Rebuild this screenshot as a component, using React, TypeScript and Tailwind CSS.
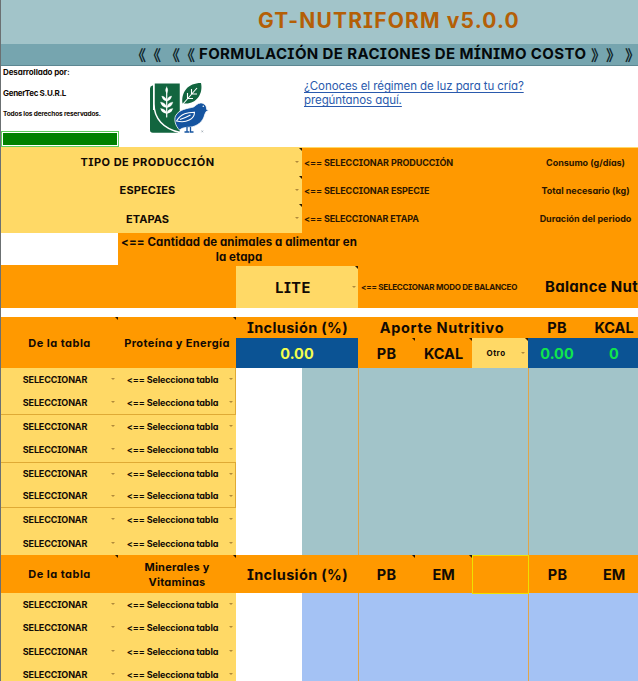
import type { ReactNode } from 'react';
import { clsx } from 'clsx';

const serifCaps = "[font-feature-settings:'ss02','cv11','calt'_0]";

function Note() {
  return <span className="absolute right-0 top-0 border-t-[3px] border-l-[3px] border-t-[#2a1700] border-l-transparent" />;
}

function Caret({ className }: { className?: string }) {
  return <span className={clsx('absolute h-0 w-0 border-x-[2px] border-t-[2px] border-x-transparent border-t-[#b08a3a]', className)} />;
}

function Cell({ children, className, note, caret }: { children?: ReactNode; className?: string; note?: boolean; caret?: string }) {
  return (
    <div className={clsx('relative flex shrink-0 items-center justify-center whitespace-nowrap', className)}>
      {children}
      {note && <Note />}
      {caret && <Caret className={caret} />}
    </div>
  );
}

function Logo() {
  return (
    <svg viewBox="148 81 64 54" className="h-[54px] w-[64px]">
      <path d="M153 85.5h-.5q-2.500 .5-2.500 3V130q0 2.800 2.800 2.800H178V110H153z" fill="#12653f" />
      <path d="M154 82.700H180.500V132.500C163 129 154 118 154 104z" fill="#12653f" stroke="#fff" strokeWidth="1.500" />
      <rect x="180" y="81" width="3" height="54" fill="#fff" />
      <g stroke="#fff" strokeWidth="1.200" fill="#fff" strokeLinecap="round">
        <path d="M166.700 92V117" fill="none" />
        <path d="M166.700 87q-2.300 3 0 6.500q2.300-3.500 0-6.500z" strokeWidth=".3" />
        <path d="M166.500 101q-4-.5-4.800-5q4.500.8 4.800 5zM166.900 101q4-.5 4.800-5q-4.500.8-4.800 5zM166.500 107.500q-5-.5-6-5.500q5.500.8 6 5.500zM166.900 107.500q5-.5 6-5.500q-5.500.8-6 5.500zM166.500 113.500q-4.800-.5-6-5q5.500.5 6 5zM166.900 113.500q4.800-.5 6-5q-5.500.5-6 5z" strokeWidth=".3" />
      </g>
      <path d="M182.500 103.500C181 92 188 83 201 83C203.500 94 196 104.500 184.500 103.500z" fill="#12653f" />
      <path d="M182.500 104.500L197 88M187.500 98.500V93M187.500 98.500H193M191.500 94V89M191.500 94H197" fill="none" stroke="#fff" strokeWidth="1.100" />
      <path d="M208.800 110.500L206.700 109.500C206.700 105.500 204 102.800 200.500 103C197.500 103.200 196 105.500 193.500 107C188 108.500 179 109 175.500 116C173.800 120 175.500 126 179.500 130C182.500 127.500 186 127.300 190 127.200C197 126.500 203.500 121.500 204.700 114.500L206.200 111.500z" fill="#1554a0" stroke="#fff" strokeWidth=".8" />
      <path d="M176.500 121C181 113 188 112.500 194.500 112.300C194.500 119 186.500 123.500 176.500 121zM180 119.500Q186 117.500 190.500 115" fill="none" stroke="#fff" strokeWidth="1.100" />
      <circle cx="203.300" cy="106.300" r=".8" fill="#fff" />
      <path d="M187 127V131.500M190.500 127V131.500M184.500 132H189M189.500 132H193.500" stroke="#1554a0" strokeWidth="1.300" />
      <path d="M201.500 130.500l1.600 1.800m0-1.800l-1.600 1.800" stroke="#8794a0" strokeWidth=".6" />
    </svg>
  );
}

function Chevron({ children, className }: { children: string; className?: string }) {
  return <span className={clsx("w-[15px] shrink-0 font-['Noto_Sans_CJK_SC',sans-serif] text-[15px] leading-[20px] text-[#10262c]", className)}>{children}</span>;
}

function SelectRow({ top, bottom, right }: { top?: boolean; bottom?: boolean; right?: boolean }) {
  return (
    <div className={clsx('flex h-[23.4px] w-[235px] bg-[#ffd966] text-[9px] font-bold', top && 'border-t border-[#dfaa35]', bottom && 'border-b border-[#dfaa35]', right && 'border-r border-[#dfaa35]')}>
      <Cell className="w-[117px] pr-[9px]" caret="left-[110px] top-[10px]">
        <span className={clsx('tracking-[-0.14px]', serifCaps)}>SELECCIONAR</span>
      </Cell>
      <Cell className="w-[117px] pr-[8px]" caret="left-[111px] top-[10px]">
        <span className="tracking-[-0.13px]">&lt;== Selecciona tabla</span>
      </Cell>
    </div>
  );
}

function Grid({ className }: { className: string }) {
  return (
    <div className="flex grow">
      <div className="w-[66px] bg-white" />
      <div className={clsx('w-[57px] border-r border-[#dfa54a]', className)} />
      <div className={clsx('w-[170px] border-r border-[#dfa54a]', className)} />
      <div className={clsx('grow', className)} />
    </div>
  );
}

function Selector({ label, hint, value, className, labelTracking, hintTracking }: { label: string; hint: string; value: string; className: string; labelTracking: string; hintTracking: string }) {
  return (
    <div className={clsx('flex', className)}>
      <Cell className="w-[301px] bg-[#ffd966] pt-px pr-[8px] text-[11px] font-bold" note caret="right-[3px] top-[13px]">
        <span className={clsx(serifCaps, labelTracking)}>{label}</span>
      </Cell>
      <Cell className="w-[227px] justify-start! pt-px pl-[2px] text-[9px] font-bold text-[#2b1600]">
        <span className={clsx(serifCaps, hintTracking)}>{hint}</span>
      </Cell>
      <Cell className="w-[113px] pt-px text-[9px] font-bold text-[#2b1600]">{value}</Cell>
    </div>
  );
}

export default function App() {
  return (
    <div className="flex h-[681px] w-[638px] flex-col overflow-hidden border-l border-[#6b7072] bg-white font-['Inter',sans-serif] text-[#120a04] [font-feature-settings:'cv11','calt'_0]">
      <header className="h-[66px] shrink-0">
        <div className="flex h-[44px] items-center bg-[#a2c4c9] pb-[3px] pl-[257px] text-[21px] font-bold text-[#b45f06]">
          <h1 className="leading-none tracking-[1.15px] whitespace-nowrap">
            <span className={serifCaps}>GT-NUTRIFORM</span> v5.0.0
          </h1>
        </div>
        <div className="flex h-[22px] items-center border-b border-[#5d8792] bg-[#76a5af] pl-[130px] text-[15px] font-bold text-[#04090b]">
          <Chevron>《</Chevron><Chevron>《</Chevron><Chevron className="ml-[4px]">《</Chevron><Chevron>《</Chevron>
          <h2 className={clsx('ml-[4px] w-[392px] shrink-0 whitespace-nowrap tracking-[0.38px]', serifCaps)}>FORMULACIÓN DE RACIONES DE MÍNIMO COSTO</h2>
          <Chevron>》</Chevron><Chevron>》</Chevron><Chevron className="ml-[4px]">》</Chevron>
        </div>
      </header>

      <section className="flex h-[81px] shrink-0">
        <div className="flex w-[118px] flex-col whitespace-nowrap font-bold">
          <p className="ml-[2px] h-[12px] text-[8px] leading-[12px] tracking-[-0.11px]">Desarrollado por:</p>
          <p className="mt-[9px] ml-[2px] h-[12px] text-[8px] leading-[12px] tracking-[-0.31px]">GenerTec S.U.R.L</p>
          <p className="mt-[9px] ml-[2px] h-[12px] text-[6.5px] leading-[12px] tracking-[-0.13px]">Todos los derechos reservados.</p>
          <div className="mt-[11px] h-[17px] w-[118px] border border-[#5fce5f] bg-white p-px">
            <div className="h-full bg-[#008000]" />
          </div>
        </div>
        <div className="w-[185px] pt-[15px] pl-[29px]"><Logo /></div>
        <a className="pt-[13px] text-[11.5px] leading-[14px] tracking-[-0.08px] text-[#2a5aad] underline underline-offset-2">¿Conoces el régimen de luz para tu cría?<br />pregúntanos aquí.</a>
      </section>

      <section className="h-[161px] shrink-0 overflow-hidden border-t border-[#ffd966] bg-[#ff9900]">
        <Selector className="h-[28px]" label="TIPO DE PRODUCCIÓN" labelTracking="tracking-[0.5px]" hint="<== SELECCIONAR PRODUCCIÓN" hintTracking="tracking-[-0.1px]" value="Consumo (g/días)" />
        <Selector className="h-[28px]" label="ESPECIES" labelTracking="tracking-[0.1px]" hint="<== SELECCIONAR ESPECIE" hintTracking="tracking-[-0.1px]" value="Total necesario (kg)" />
        <Selector className="h-[29px]" label="ETAPAS" labelTracking="tracking-[0.04px]" hint="<== SELECCIONAR ETAPA" hintTracking="tracking-[-0.14px]" value="Duración del periodo" />
        <div className="flex h-[33px]">
          <div className="h-[32px] w-[117px] bg-white" />
          <p className="w-[242px] pt-[2px] text-center text-[11.5px] leading-[15px] font-bold tracking-[0.08px] whitespace-nowrap">&lt;== Cantidad de animales a alimentar en<br />la etapa</p>
        </div>
        <div className="flex h-[42px]">
          <Cell className="ml-[235px] w-[122px] bg-[#ffd966] pt-px pr-[8px] text-[14.5px] font-bold" note caret="right-[2px] top-[20px]">
            <span className={clsx('tracking-[0.5px]', serifCaps)}>LITE</span>
          </Cell>
          <Cell className="w-[187px] justify-start! pl-[3px] text-[8px] font-bold text-[#2b1600]">
            <span className={clsx('tracking-[-0.23px]', serifCaps)}>&lt;== SELECCIONAR MODO DE BALANCEO</span>
          </Cell>
          <Cell className="pt-px text-[15px] font-bold tracking-[0.29px]">Balance Nut</Cell>
        </div>
      </section>

      <section className="mt-[9px] flex h-[51px] shrink-0 bg-[#ff9900] font-bold">
        <Cell className="w-[117px] pt-[2px] text-[11px] tracking-[0.47px]" note>De la tabla</Cell>
        <Cell className="w-[118px] pt-[2px] text-[11px] tracking-[0.4px]" note>Proteína y Energía</Cell>
        <div className="w-[122px] shrink-0 text-[14.5px]">
          <Cell className="h-[21px] pt-px pl-px tracking-[0.35px]"><span><span className={serifCaps}>I</span>nclusión (%)</span></Cell>
          <Cell className="h-[30px] bg-[#0b5394] pt-px text-[#f3ff4d]">0.00</Cell>
        </div>
        <div className="w-[170px] shrink-0 text-[14.5px]">
          <Cell className="h-[21px] pt-px pr-[2px] tracking-[0.64px]">Aporte Nutritivo</Cell>
          <div className="flex h-[30px]">
            <Cell className="w-[57px] pt-px tracking-[0.25px]" note>PB</Cell>
            <Cell className="w-[57px] pt-px" note>KCAL</Cell>
            <Cell className="w-[56px] bg-[#ffd966] pr-[8px] text-[8px] tracking-[0.5px]" note caret="right-[3px] top-[14px]">Otro</Cell>
          </div>
        </div>
        <div className="w-[114px] shrink-0 text-[14.5px]">
          <div className="flex h-[21px]">
            <Cell className="w-[58px] pt-px tracking-[0.25px]">PB</Cell>
            <Cell className="w-[56px] pt-px">KCAL</Cell>
          </div>
          <div className="flex h-[30px] bg-[#0b5394] text-[#10e64c]">
            <Cell className="w-[58px] pt-px">0.00</Cell>
            <Cell className="w-[56px] pt-px">0</Cell>
          </div>
        </div>
      </section>

      <section className="flex h-[187px] shrink-0">
        <div className="w-[235px]">
          <SelectRow right />
          <SelectRow bottom right />
          <SelectRow />
          <SelectRow />
          <SelectRow top right />
          <SelectRow bottom right />
          <SelectRow />
          <SelectRow />
        </div>
        <Grid className="bg-[#a2c4c9]" />
      </section>

      <section className="flex h-[38px] shrink-0 bg-[#ff9900] font-bold">
        <Cell className="w-[117px] pt-px text-[11px] tracking-[0.47px]" note>De la tabla</Cell>
        <Cell className="w-[118px] pt-px text-center text-[11px] leading-[15px] tracking-[0.22px]" note>Minerales y<br />Vitaminas</Cell>
        <Cell className="w-[122px] pt-px pl-px text-[14.5px] tracking-[0.35px]"><span><span className={serifCaps}>I</span>nclusión (%)</span></Cell>
        <Cell className="w-[57px] pt-px text-[14.5px] tracking-[0.25px]" note>PB</Cell>
        <Cell className="w-[57px] pt-px text-[14.5px] tracking-[-0.2px]" note>EM</Cell>
        <Cell className="z-10 -mb-px w-[57px] border border-[#efe000]" />
        <Cell className="w-[57px] pt-px text-[14.5px] tracking-[0.25px]">PB</Cell>
        <Cell className="w-[56px] pt-px text-[14.5px] tracking-[-0.2px]">EM</Cell>
      </section>

      <section className="flex h-[94px] shrink-0">
        <div className="w-[235px]">
          <SelectRow />
          <SelectRow />
          <SelectRow />
          <SelectRow />
        </div>
        <Grid className="bg-[#a4c2f4]" />
      </section>
    </div>
  );
}
